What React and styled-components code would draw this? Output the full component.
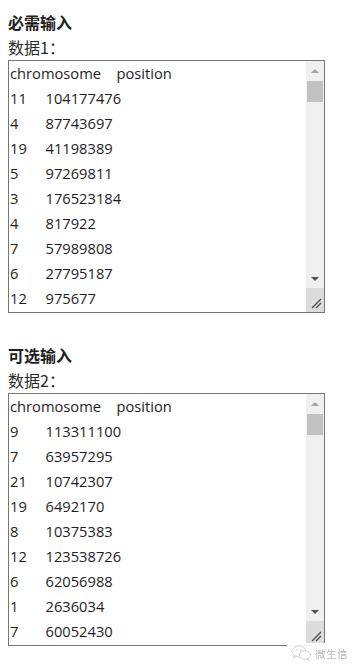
import React from 'react'
import styled, { createGlobalStyle } from 'styled-components'

const GlobalStyle = createGlobalStyle`
  html, body {
    margin: 0;
    padding: 0;
    background: #fff;
  }
  body {
    font-family: "Open Sans", "Noto Sans CJK SC", sans-serif;
    color: #222;
  }
`

const Page = styled.div`
  padding: 10px 8px;
  display: flex;
  flex-direction: column;
  gap: 30px;
`

const Section = styled.section`
  display: flex;
  flex-direction: column;
`

const Heading = styled.div`
  font-family: "Noto Sans CJK SC", sans-serif;
  font-weight: 700;
  font-size: 16px;
  line-height: 25px;
  color: #1e1e1e;
`

const Label = styled.label`
  font-family: "Noto Sans CJK SC", sans-serif;
  font-size: 16px;
  line-height: 25px;
  color: #2a2a2a;
`

const Box = styled.div`
  display: flex;
  width: 317px;
  height: 253px;
  box-sizing: border-box;
  border: 1px solid #767676;
  background: #fff;
`

const Input = styled.textarea`
  flex: 1;
  min-width: 0;
  margin: 0;
  border: none;
  outline: none;
  resize: none;
  overflow: hidden;
  padding: 0 1px;
  font-family: "Open Sans", sans-serif;
  font-size: 14.7px;
  line-height: 25px;
  color: #1e1e1e;
  tab-size: 35.5px;
  white-space: pre;
  background: transparent;
`

const ScrollBar = styled.div`
  width: 18px;
  display: flex;
  flex-direction: column;
  background: #f0f0f0;
`

const ArrowButton = styled.div`
  height: 19px;
  display: flex;
  align-items: center;
  justify-content: center;
  &::before {
    content: '';
    width: 0;
    height: 0;
    border-left: 4px solid transparent;
    border-right: 4px solid transparent;
    ${p => (p.$dir === 'up' ? 'border-bottom' : 'border-top')}: 4px solid
      ${p => (p.$dim ? '#a3a3a3' : '#505050')};
  }
`

const Track = styled.div`
  flex: 1;
  padding: 1px 1px 0;
`

const Thumb = styled.div`
  height: 21px;
  background: #c1c1c1;
`

const Resizer = styled.div`
  height: 24px;
  background: #dcdcdc;
  display: flex;
  align-items: flex-end;
  justify-content: flex-end;
  padding: 0 2px 3px 0;
  box-sizing: border-box;
`

const Watermark = styled.div`
  position: fixed;
  right: 8px;
  bottom: 3px;
  display: flex;
  align-items: center;
  gap: 3px;
  padding: 2px 2px 2px 4px;
  background: rgba(255, 255, 255, 0.92);
  font-family: "Noto Sans CJK SC", sans-serif;
  font-size: 10.5px;
  color: #b9b9b9;
  letter-spacing: 0.5px;
`

const data1 = [
  'chromosome\tposition',
  '11\t104177476',
  '4\t87743697',
  '19\t41198389',
  '5\t97269811',
  '3\t176523184',
  '4\t817922',
  '7\t57989808',
  '6\t27795187',
  '12\t975677',
  '2\t47403301',
  '17\t7577120',
].join('\n')

const data2 = [
  'chromosome\tposition',
  '9\t113311100',
  '7\t63957295',
  '21\t10742307',
  '19\t6492170',
  '8\t10375383',
  '12\t123538726',
  '6\t62056988',
  '1\t2636034',
  '7\t60052430',
  '3\t41266101',
  '10\t89692905',
].join('\n')

const Grip = () => (
  <svg width="11" height="11" viewBox="0 0 11 11">
    <path d="M1 10 L10 1 M5 10 L10 5" stroke="#4d4d4d" strokeWidth="1.3" fill="none" />
  </svg>
)

const WeChat = () => (
  <svg width="21" height="16" viewBox="0 0 21 16">
    <ellipse cx="8" cy="6.5" rx="7" ry="5.5" fill="none" stroke="#d2d2d2" strokeWidth="1" />
    <path d="M3.5 10.5 L2.5 13 L6 11.5" fill="none" stroke="#d2d2d2" strokeWidth="1" />
    <ellipse cx="14" cy="10" rx="5.5" ry="4.3" fill="#fff" stroke="#d2d2d2" strokeWidth="1" />
    <path d="M17 13.5 L18.2 15.4 L15.6 14.2" fill="none" stroke="#d2d2d2" strokeWidth="1" />
    <circle cx="5.5" cy="5" r="0.8" fill="#d2d2d2" />
    <circle cx="10" cy="5" r="0.8" fill="#d2d2d2" />
  </svg>
)

const Field = ({ id, title, label, value }) => (
  <Section>
    <Heading>{title}</Heading>
    <Label htmlFor={id}>{label}</Label>
    <Box>
      <Input id={id} readOnly defaultValue={value} spellCheck={false} />
      <ScrollBar>
        <ArrowButton $dir="up" $dim />
        <Track>
          <Thumb />
        </Track>
        <ArrowButton $dir="down" />
        <Resizer>
          <Grip />
        </Resizer>
      </ScrollBar>
    </Box>
  </Section>
)

export default function App() {
  return (
    <>
      <GlobalStyle />
      <Page>
        <Field id="data1" title="必需输入" label="数据1：" value={data1} />
        <Field id="data2" title="可选输入" label="数据2：" value={data2} />
      </Page>
      <Watermark>
        <WeChat />
        <span>微生信</span>
      </Watermark>
    </>
  )
}
